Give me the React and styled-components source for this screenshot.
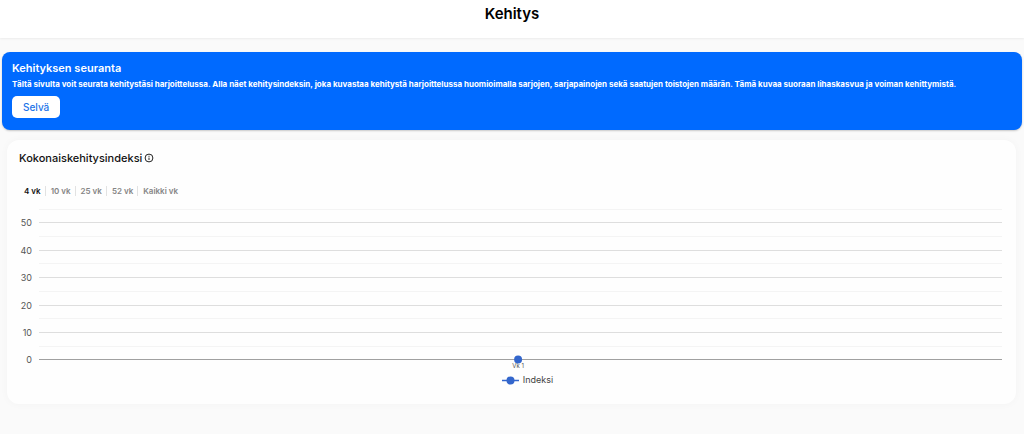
import React, { useState } from "react";
import styled, { createGlobalStyle } from "styled-components";

const GlobalStyle = createGlobalStyle`
  * {
    box-sizing: border-box;
  }

  body {
    margin: 0;
    background: #fafafa;
    color: #111;
    font-family: Inter, "Liberation Sans", sans-serif;
  }

  h1, h2, p {
    margin: 0;
  }
`;

const Header = styled.header`
  display: flex;
  justify-content: center;
  height: 38px;
  padding-top: 4px;
  background: #fff;
  box-shadow: 0 1px 2px rgba(0, 0, 0, 0.06);

  h1 {
    font-size: 15px;
    line-height: 20px;
    font-weight: 600;
    color: #000;
  }
`;

const Main = styled.main`
  display: flex;
  flex-direction: column;
  gap: 10px;
  padding: 14px 2px 30px;
`;

const Banner = styled.section`
  display: flex;
  flex-direction: column;
  align-items: flex-start;
  padding: 8px 10px 12px;
  border-radius: 8px;
  background: #006aff;
  color: #fff;
  box-shadow: 0 1px 2px rgba(0, 0, 0, 0.2);

  h2 {
    font-size: 11px;
    line-height: 16px;
    font-weight: 600;
  }

  p {
    font-size: 8px;
    line-height: 16px;
    font-weight: 700;
  }
`;

const ConfirmButton = styled.button`
  height: 22px;
  margin-top: 4px;
  padding: 0 11px;
  border: 0;
  border-radius: 5px;
  background: #fff;
  color: #1a73e8;
  font-family: inherit;
  font-size: 10px;
  font-weight: 500;
  cursor: pointer;
`;

const Card = styled.section`
  margin: 0 6px 0 5px;
  padding: 10px 14px 18px 12px;
  border-radius: 12px;
  background: #fefefe;
  box-shadow: 0 0 8px rgba(0, 0, 0, 0.03);
`;

const CardTitle = styled.div`
  display: flex;
  align-items: center;
  gap: 2px;

  h2 {
    font-size: 11px;
    line-height: 16px;
    font-weight: 500;
  }
`;

const Ranges = styled.div`
  display: flex;
  margin-top: 20px;
`;

const RangeButton = styled.button`
  padding: 0 4px 0 5px;
  border: 0;
  background: none;
  color: ${(props) => (props.$active ? "#111" : "#858585")};
  font-family: inherit;
  font-size: 8px;
  line-height: 10px;
  font-weight: 600;
  cursor: pointer;

  & + & {
    border-left: 1px solid #e2e2e2;
  }
`;

const ChartBox = styled.div`
  display: grid;
  grid-template-columns: 20px 1fr;
  margin-top: 8px;
`;

const Plot = styled.svg`
  display: block;
  width: 100%;
  height: 170px;
  overflow: visible;

  .tick {
    fill: #555;
    font-size: 9px;
    text-anchor: end;
  }

  .week {
    fill: #555;
    font-size: 6px;
    text-anchor: middle;
  }
`;

const Legend = styled.div`
  display: flex;
  justify-content: center;
  align-items: center;
  gap: 4px;
  margin-left: 34px;
  font-size: 9px;
  line-height: 12px;
  color: #444;
`;

const ranges = ["4 vk", "10 vk", "25 vk", "52 vk", "Kaikki vk"];
const ticks = [0, 10, 20, 30, 40, 50];

// y position of a value inside the plot
const yOf = (value) => Math.round(155.3 - value * 2.74) + 0.5;

const InfoIcon = () => (
  <svg width="10" height="10" viewBox="0 0 10 10" fill="none" stroke="#222" aria-hidden="true">
    <circle cx="5" cy="5" r="3.9" />
    <path d="M5 4.6v2.4M5 2.8v1" />
  </svg>
);

const Chart = () => (
  <ChartBox>
    <span />
    <Plot role="img" aria-label="Indeksi">
      {ticks.map((t) => (
        <line key={`minor${t}`} x1="0" x2="100%" y1={yOf(t + 5)} y2={yOf(t + 5)} stroke="#f4f4f4" />
      ))}
      {ticks.map((t) => (
        <g key={t}>
          <line x1="0" x2="100%" y1={yOf(t)} y2={yOf(t)} stroke={t === 0 ? "#a0a0a0" : "#dedede"} />
          <text className="tick" x="-7" y={yOf(t) + 3}>{t}</text>
        </g>
      ))}
      <circle cx="49.75%" cy={yOf(0)} r="4" fill="#3366cc" />
      <text className="week" x="49.75%" y="164">Vk 1</text>
    </Plot>
  </ChartBox>
);

const App = () => {
  const [range, setRange] = useState("4 vk");

  return (
    <>
      <GlobalStyle />
      <Header>
        <h1>Kehitys</h1>
      </Header>
      <Main>
        <Banner>
          <h2>Kehityksen seuranta</h2>
          <p>
            Tältä sivulta voit seurata kehitystäsi harjoittelussa. Alla näet kehitysindeksin, joka
            kuvastaa kehitystä harjoittelussa huomioimalla sarjojen, sarjapainojen sekä saatujen
            toistojen määrän. Tämä kuvaa suoraan lihaskasvua ja voiman kehittymistä.
          </p>
          <ConfirmButton>Selvä</ConfirmButton>
        </Banner>
        <Card>
          <CardTitle>
            <h2>Kokonaiskehitysindeksi</h2>
            <InfoIcon />
          </CardTitle>
          <Ranges>
            {ranges.map((r) => (
              <RangeButton key={r} $active={r === range} onClick={() => setRange(r)}>
                {r}
              </RangeButton>
            ))}
          </Ranges>
          <Chart />
          <Legend>
            <svg width="17" height="9" viewBox="0 0 17 9" aria-hidden="true">
              <path d="M0 4.5h17" stroke="#3366cc" strokeWidth="1.5" />
              <circle cx="8.5" cy="4.5" r="4" fill="#3366cc" />
            </svg>
            Indeksi
          </Legend>
        </Card>
      </Main>
    </>
  );
};

export default App;
